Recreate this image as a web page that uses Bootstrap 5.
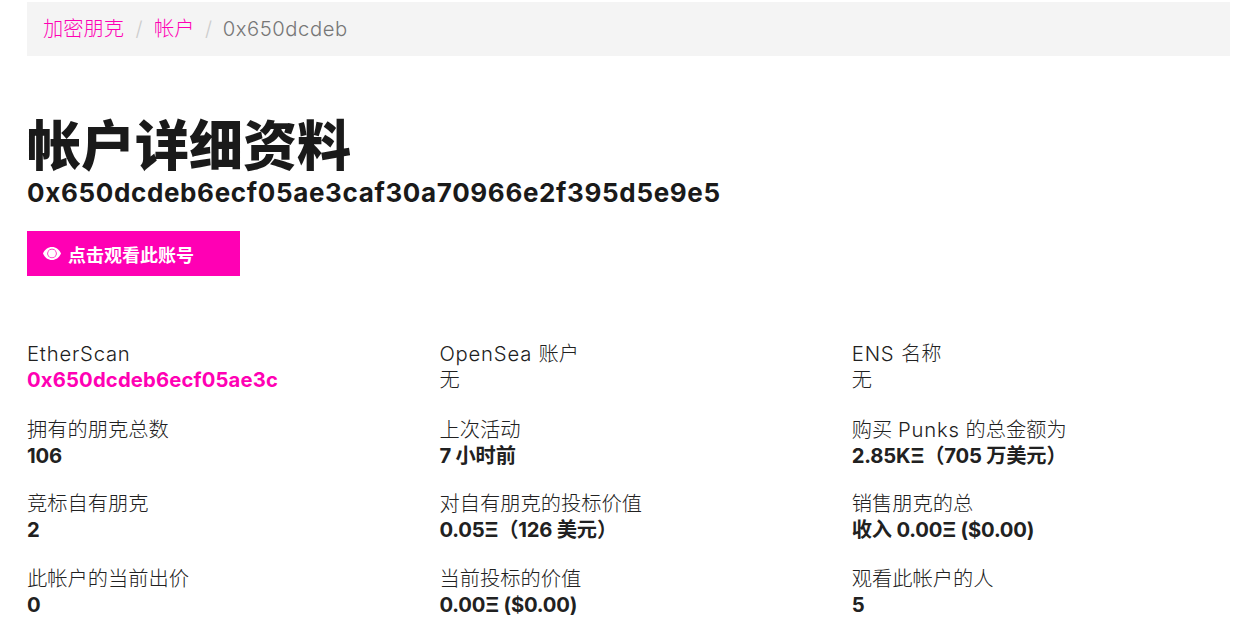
<!doctype html>
<html lang="zh">
<head>
<meta charset="utf-8">
<link href="https://cdn.jsdelivr.net/npm/bootstrap@5.3.0/dist/css/bootstrap.min.css" rel="stylesheet">
<style>
body{font-family:"Inter","Noto Sans CJK SC",sans-serif;font-size:20.25px;font-weight:300;color:#212121;overflow:hidden;background:#fff}
.pg{padding:2px 7px 0 27px}
.crumbs{background:#f4f4f4;height:54px;margin:0;padding:0 16px;align-items:center;font-size:20.25px}
.crumbs .breadcrumb-item{color:#777}
.crumbs .breadcrumb-item.active{letter-spacing:.55px}
.crumbs .breadcrumb-item+.breadcrumb-item{padding-left:11.5px}
.crumbs .breadcrumb-item+.breadcrumb-item::before{padding-right:11.5px;color:#ccc;letter-spacing:0}
.crumbs .breadcrumb-item.active{padding-left:10.5px}
.crumbs .breadcrumb-item.active::before{padding-right:10.5px}
.crumbs a,.pink{color:#ff00b4;text-decoration:none}
.ttl{font-size:54px;font-weight:900;line-height:64px;margin:59px 0 0;color:#1a1a1a}
.sub{font-size:26px;font-weight:700;line-height:30px;margin:-1px 0 23px;color:#1a1a1a;letter-spacing:.65px}
.watch{background:#ff00b4;color:#fff;font-size:18px;font-weight:700;width:213px;height:45px;border-radius:0;border:0;padding:4px 16px 0;display:flex;align-items:center;gap:7px}
.watch:hover{background:#ff00b4;color:#fff}
.watch svg{margin-top:-5px}
.info{display:grid;grid-template-columns:412.4px 412.4px 1fr;row-gap:22.67px;margin-top:65px}
.info>div:nth-child(-n+3){margin-bottom:1px}
.info div div{line-height:26px}
.lat{letter-spacing:.8px}
.info b{display:block;font-weight:700;line-height:26px;letter-spacing:-.2px}
.info b .pink{letter-spacing:.15px}
</style>
</head>
<body>
<div class="pg">
<ol class="breadcrumb crumbs">
<li class="breadcrumb-item"><a href="#">加密朋克</a></li>
<li class="breadcrumb-item"><a href="#">帐户</a></li>
<li class="breadcrumb-item active">0x650dcdeb</li>
</ol>
<h1 class="ttl">帐户详细资料</h1>
<h2 class="sub">0x650dcdeb6ecf05ae3caf30a70966e2f395d5e9e5</h2>
<button class="btn watch"><svg width="18" height="13" viewBox="0 0 18 13"><path fill="#fff" fill-rule="evenodd" d="M9 0C5 0 1.700 2.500 0 6.500 1.700 10.500 5 13 9 13s7.300-2.500 9-6.500C16.300 2.500 13 0 9 0zm0 11.200a4.700 4.700 0 1 1 0-9.400 4.700 4.700 0 0 1 0 9.400z"/><circle cx="9" cy="6.500" r="3.900" fill="#fff"/></svg>点击观看此账号</button>
<div class="info">
<div><div class="lat">EtherScan</div><b><a class="pink" href="#">0x650dcdeb6ecf05ae3c</a></b></div>
<div><div><span class="lat">OpenSea </span>账户</div><div>无</div></div>
<div><div><span class="lat">ENS </span>名称</div><div>无</div></div>
<div><div>拥有的朋克总数</div><b>106</b></div>
<div><div>上次活动</div><b>7 小时前</b></div>
<div><div>购买 <span class="lat">Punks</span> 的总金额为</div><b>2.85KΞ（705 万美元）</b></div>
<div><div>竞标自有朋克</div><b>2</b></div>
<div><div>对自有朋克的投标价值</div><b>0.05Ξ（126 美元）</b></div>
<div><div>销售朋克的总</div><b>收入 0.00Ξ ($0.00)</b></div>
<div><div>此帐户的当前出价</div><b>0</b></div>
<div><div>当前投标的价值</div><b>0.00Ξ ($0.00)</b></div>
<div><div>观看此帐户的人</div><b>5</b></div>
</div>
</div>
<script src="https://cdn.jsdelivr.net/npm/bootstrap@5.3.0/dist/js/bootstrap.bundle.min.js"></script>
</body>
</html>
